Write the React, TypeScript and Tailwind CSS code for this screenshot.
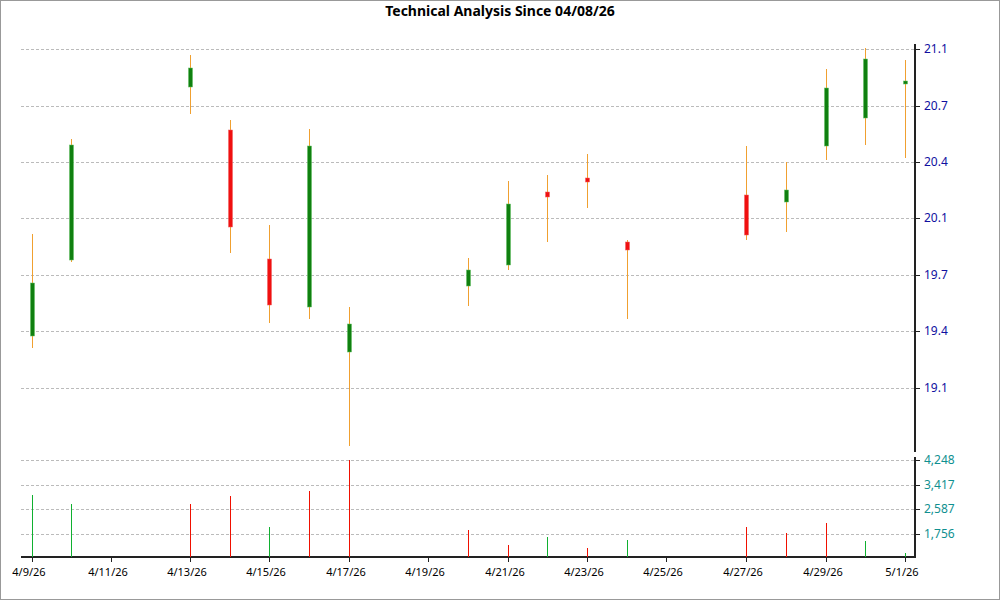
export default function App() {
  const candles: [number, number, number, number, number, string][] = [
    [31, 234, 348, 283, 336, "g"], [70, 139, 262, 145, 260, "g"], [189, 55, 114, 68, 87, "g"],
    [229, 120, 253, 130, 227, "r"], [268, 225, 323, 259, 305, "r"], [308, 129, 319, 146, 307, "g"],
    [348, 307, 446, 324, 352, "g"], [467, 258, 306, 270, 286, "g"], [507, 181, 270, 204, 265, "g"],
    [546, 175, 242, 192, 197, "r"], [586, 154, 208, 178, 182, "r"], [626, 240, 319, 242, 250, "r"],
    [745, 146, 240, 195, 235, "r"], [785, 162, 232, 190, 202, "g"], [825, 69, 160, 88, 146, "g"],
    [864, 48, 145, 59, 118, "g"], [904, 60, 158, 81, 84, "g"],
  ];
  const vols: [number, number, string][] = [
    [31, 495, "g"], [70, 504, "g"], [189, 504, "r"], [229, 496, "r"], [268, 527, "g"], [308, 491, "r"],
    [348, 460, "r"], [467, 530, "r"], [507, 545, "r"], [546, 537, "g"], [586, 548, "r"], [626, 540, "g"],
    [745, 527, "r"], [785, 533, "r"], [825, 523, "r"], [864, 541, "g"], [904, 553, "g"],
  ];
  const pg: [number, string][] = [[49, "21.1"], [106, "20.7"], [162, "20.4"], [218, "20.1"], [275, "19.7"], [331, "19.4"], [388, "19.1"]];
  const vg: [number, string][] = [[460, "4,248"], [485, "3,417"], [509, "2,587"], [534, "1,756"]];
  const xl: [number, string][] = [[31, "4/9/26"], [110, "4/11/26"], [189, "4/13/26"], [268, "4/15/26"], [348, "4/17/26"], [427, "4/19/26"], [507, "4/21/26"], [586, "4/23/26"], [665, "4/25/26"], [745, "4/27/26"], [825, "4/29/26"], [904, "5/1/26"]];
  const off = 20;
  return (
    <div className="w-[1000px] h-[600px] bg-white border border-[#999] flex flex-col font-['Liberation_Sans',Arial,sans-serif]">
      <div className="h-[19px] pt-px text-center text-[14px] font-bold leading-[18px] text-black">Technical Analysis Since 04/08/26</div>
      <svg width="998" height="560" viewBox={`0 ${off} 998 560`} className="block">
        {pg.map(([y]) => <line key={y} x1="20" x2="914" y1={y + 0.5} y2={y + 0.5} stroke="#bbb" strokeDasharray="3 2" />)}
        {vg.map(([y]) => <line key={y} x1="20" x2="914" y1={y + 0.5} y2={y + 0.5} stroke="#bbb" strokeDasharray="3 2" />)}
        <line x1="914" x2="914" y1="44" y2="452" stroke="#222" strokeWidth="2" />
        <line x1="914" x2="914" y1="457" y2="558" stroke="#222" strokeWidth="2" />
        <line x1="20" x2="914" y1="557" y2="557" stroke="#222" strokeWidth="2" />
        {pg.map(([y, t]) => (
          <g key={t}><line x1="914" x2="919" y1={y + 0.5} y2={y + 0.5} stroke="#222" /><text x="923" y={y + 4} fontSize="12" fill="#1010a0">{t}</text></g>
        ))}
        {vg.map(([y, t]) => (
          <g key={t}><line x1="914" x2="919" y1={y + 0.5} y2={y + 0.5} stroke="#222" /><text x="923" y={y + 4} fontSize="12" fill="#109090">{t}</text></g>
        ))}
        {xl.map(([x, t]) => (
          <g key={t}><line x1={x + 0.5} x2={x + 0.5} y1="557" y2="562" stroke="#222" /><text x={x - 3} y="576" textAnchor="middle" fontSize="11" fill="#000">{t}</text></g>
        ))}
        {vols.map(([x, y, c]) => <line key={x} x1={x + 0.5} x2={x + 0.5} y1={y} y2="557" stroke={c === "g" ? "#10b030" : "#f01000"} />)}
        {candles.map(([x, wt, wb, bt, bb, c]) => (
          <g key={x}>
            <line x1={x + 0.5} x2={x + 0.5} y1={wt} y2={wb} stroke="#f0a030" />
            <rect x={x - 1.5} y={bt} width="4" height={Math.max(bb - bt, 3)} fill={c === "g" ? "#108010" : "#f01010"} stroke={c === "g" ? "#60c060" : "#f06060"} strokeWidth="0.5" />
          </g>
        ))}
        <rect x="47" y="583" width="5" height="6" fill="#f05020" />
        <text x="60" y="591" fontSize="11" fill="#f05030">Price: 21.90  05/01/26</text>
        <line x1="194" x2="199" y1="587.5" y2="587.5" stroke="#10b0b0" />
        <text x="207" y="591" fontSize="11" fill="#10b0c0">Volume: 926.01  05/01/26</text>
      </svg>
    </div>
  );
}
